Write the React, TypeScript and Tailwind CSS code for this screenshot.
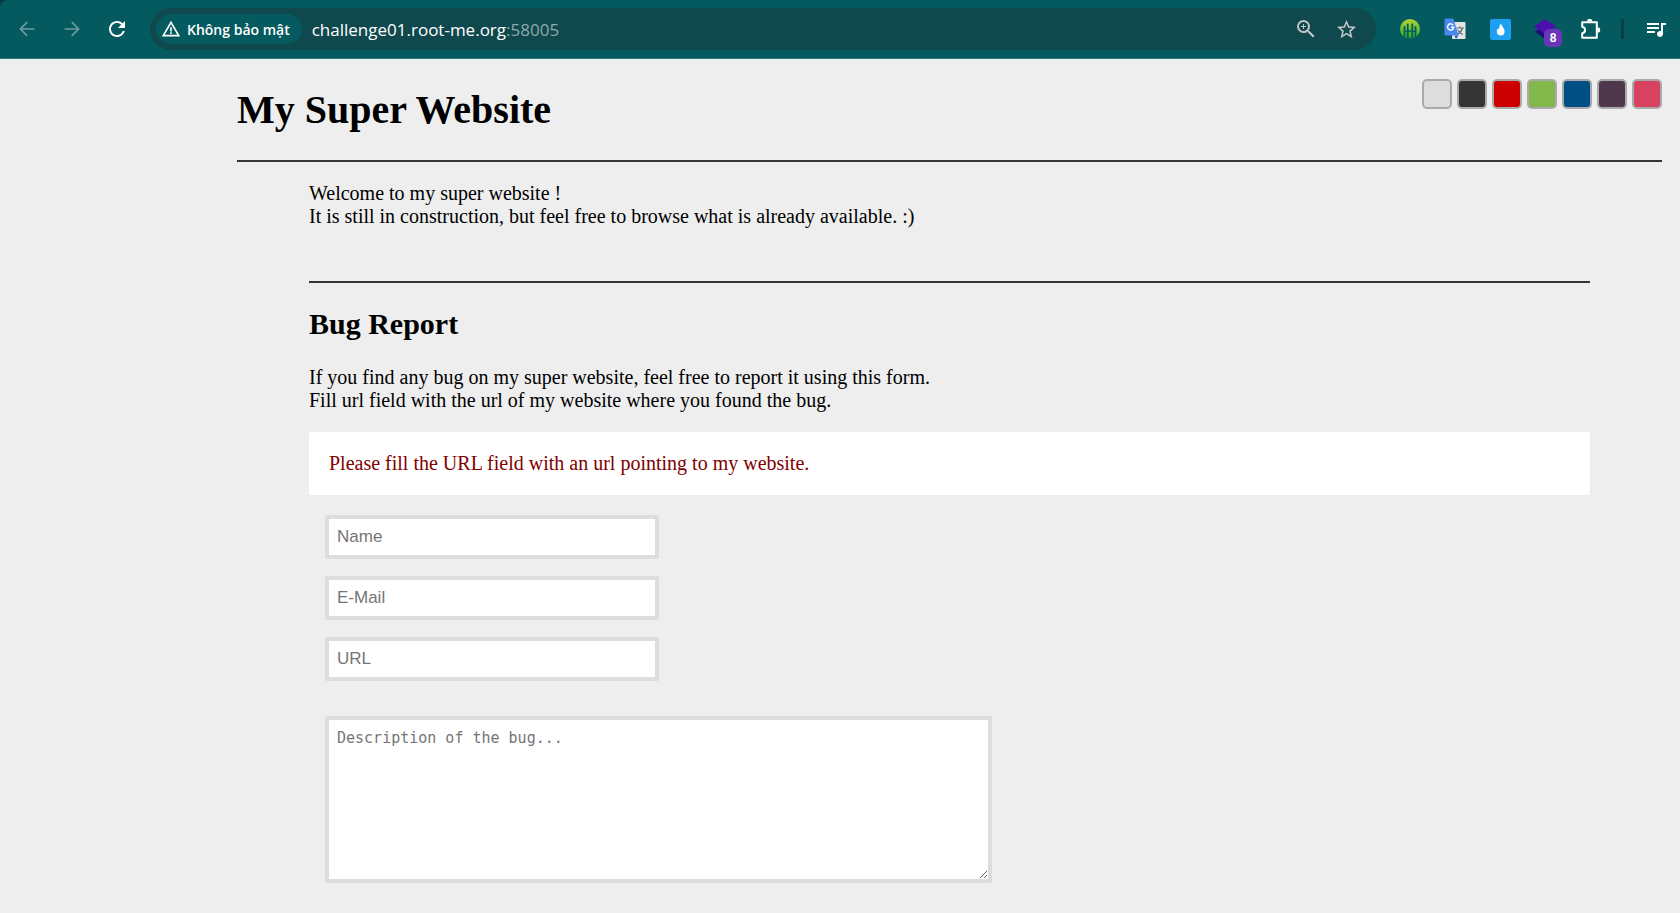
import React from "react";
import { MdQueueMusic, MdRefresh, MdStarBorder, MdWarningAmber, MdZoomIn } from "react-icons/md";

const themes = [
  { name: "Light", color: "bg-[#dddddd]" },
  { name: "Dark", color: "bg-[#353535]" },
  { name: "Red", color: "bg-[#cc0000]" },
  { name: "Green", color: "bg-[#83b84d]" },
  { name: "Blue", color: "bg-[#004f84]" },
  { name: "Plum", color: "bg-[#4f384c]" },
  { name: "Pink", color: "bg-[#d84160]" },
];

const fields = [
  { id: "name", label: "Name", type: "text" },
  { id: "email", label: "E-Mail", type: "email" },
  { id: "url", label: "URL", type: "text" },
];

function ToolButton({ label, children }: { label: string; children: React.ReactNode }) {
  return (
    <button type="button" aria-label={label} className="flex size-9 shrink-0 items-center justify-center">
      {children}
    </button>
  );
}

function ArrowIcon({ className }: { className?: string }) {
  return (
    <svg viewBox="0 0 16 16" className={className} width="16" height="16" fill="none" stroke="currentColor" strokeWidth="1.7">
      <path d="M15.3 8H1.6M8.2 1.2 1.4 8l6.8 6.8" />
    </svg>
  );
}

function TreesIcon() {
  return (
    <svg viewBox="0 0 20 20" width="20" height="20">
      <defs>
        <linearGradient id="leaf" x1="0" y1="0" x2="0" y2="1">
          <stop offset="0" stopColor="#b4d332" />
          <stop offset="1" stopColor="#22a833" />
        </linearGradient>
        <clipPath id="disc">
          <circle cx="10" cy="10" r="10" />
        </clipPath>
      </defs>
      <circle cx="10" cy="10" r="10" fill="url(#leaf)" />
      <g clipPath="url(#disc)" stroke="#055a5f" strokeLinecap="round" fill="none">
        <path d="M4.5 8v12M7.700 5.500v14.500M12.300 5.500v14.500M15.500 8v12" strokeWidth="1.800" />
        <path d="M4.500 12.500h3.200M7.700 11l2.300 1.500 2.300-1.500M12.300 12.500h3.200" strokeWidth="1.200" />
        <path d="M1 19.500h18" strokeWidth="1.500" />
      </g>
    </svg>
  );
}

function TranslateIcon() {
  return (
    <svg viewBox="0 0 22 22" width="22" height="22">
      <rect x="8" y="4" width="13.500" height="17" rx="1" fill="#e3e5e6" />
      <path d="M12.500 10h7.500M16 8.500V10M18.500 10c-.8 3-2.500 5-5 6.500M14 12c1 2 2.500 3.500 4.800 4.500" stroke="#5f6f76" strokeWidth="1.200" fill="none" />
      <path d="M10.500 17.500h4L12 21z" fill="#2f56c8" />
      <path d="M1.500.5h7.800l5.400 17H1.500a1 1 0 0 1-1-1v-15a1 1 0 0 1 1-1Z" fill="#4a86f0" />
      <path d="M9.200 7.200A3.100 3.100 0 1 0 9.700 9.300H7" stroke="#fff" strokeWidth="1.400" fill="none" />
    </svg>
  );
}

function DropIcon() {
  return (
    <svg viewBox="0 0 21 21" width="21" height="21">
      <rect width="21" height="21" rx="2" fill="#1d9ff2" />
      <path d="M11 4.500c.6 2.700 3.600 4.800 3.600 8a3.900 3.900 0 0 1-7.800 0c0-1.400.6-2.400 1.300-3.200.2.600.6 1 1.100 1.200-.1-2.400.5-4.600 1.800-6Z" fill="#fff" />
    </svg>
  );
}

function LayersIcon() {
  return (
    <svg viewBox="0 0 22 20" width="22" height="20">
      <path d="M1 12.500 11 7l10 5.500L11 20z" fill="#1d0a78" />
      <path d="M11 0 22 7.500 11 15 0 7.500z" fill="#4a0fae" />
    </svg>
  );
}

function PuzzleIcon() {
  return (
    <svg viewBox="0 0 21 21" width="21" height="21">
      <path
        d="M2.200 3.200h14.600v15.600H2.200v-4.500c3.800-.6 3.800-6 0-6.600z"
        fill="none"
        stroke="#fff"
        strokeWidth="2"
        strokeLinejoin="round"
      />
      <path d="M7 2.500a2.700 2.700 0 0 1 5.400 0zM17.500 8.300a2.700 2.700 0 0 1 0 5.400z" fill="#fff" />
    </svg>
  );
}

function BrowserBar() {
  return (
    <div className="bg-[#063c42]">
      <header className="flex h-[59px] items-center rounded-tl-lg border-b border-[#24767b] bg-[#055a5f] pr-1.5 pl-[9px]">
        <nav aria-label="Browser" className="flex gap-[9px]">
          <ToolButton label="Back">
            <ArrowIcon className="text-[#6d9da0]" />
          </ToolButton>
          <ToolButton label="Forward">
            <ArrowIcon className="rotate-180 text-[#6d9da0]" />
          </ToolButton>
          <ToolButton label="Reload">
            <MdRefresh className="size-6 text-white" />
          </ToolButton>
        </nav>
        <div className="ml-[15px] flex h-[42px] min-w-0 flex-1 items-center rounded-full bg-[#0f484d] pr-3 pl-1.5">
          <button type="button" className="flex h-[30px] shrink-0 items-center gap-1.5 rounded-full bg-[#055a5f] pr-3 pl-[5px] font-['Open_Sans',sans-serif] text-[14px] font-semibold text-white">
            <MdWarningAmber className="size-5" />
            Không bảo mật
          </button>
          <p className="ml-2.5 min-w-0 flex-1 truncate font-['Open_Sans',sans-serif] text-[17px] text-white">
            challenge01.root-me.org<span className="text-[#8fa9ab]">:58005</span>
          </p>
          <div className="flex gap-1 text-[#c4c7c8]">
            <ToolButton label="Zoom">
              <MdZoomIn className="size-6" />
            </ToolButton>
            <ToolButton label="Bookmark this page">
              <MdStarBorder className="size-[23px]" />
            </ToolButton>
          </div>
        </div>
        <div className="ml-4 flex items-center gap-[9px]">
          <ToolButton label="Trees extension">
            <TreesIcon />
          </ToolButton>
          <ToolButton label="Translate">
            <TranslateIcon />
          </ToolButton>
          <ToolButton label="Drop extension">
            <DropIcon />
          </ToolButton>
          <div className="relative">
            <ToolButton label="Layers extension">
              <LayersIcon />
            </ToolButton>
            <span className="absolute top-[18px] left-[17px] flex size-[18px] items-center justify-center rounded-[5px] bg-[#6936b8] font-['Liberation_Sans',sans-serif] text-xs font-bold text-white">
              8
            </span>
          </div>
          <ToolButton label="Extensions">
            <PuzzleIcon />
          </ToolButton>
        </div>
        <div className="mr-3.5 ml-[13px] h-5 w-[3px] bg-[#063f45]" />
        <ToolButton label="Media controls">
          <MdQueueMusic className="size-6 text-white" />
        </ToolButton>
      </header>
    </div>
  );
}

export default function App() {
  return (
    <div className="min-h-screen bg-[#eeeeee] font-['Liberation_Serif',serif] text-[20px] leading-[23px] text-black">
      <BrowserBar />
      <div className="pr-[18px] pl-[237px]">
        <div className="flex items-start justify-between border-b-2 border-[#353535]">
          <h1 className="py-[27px] text-[40px] leading-[47px] font-bold">My Super Website</h1>
          <div className="mt-5 flex gap-[5px]">
            {themes.map((t) => (
              <button
                key={t.name}
                type="button"
                aria-label={t.name}
                className={`size-[30px] rounded-[5px] border-2 border-[#aaaaaa] ${t.color}`}
              />
            ))}
          </div>
        </div>
        <main className="px-18">
          <p className="pt-5 pb-[53px]">
            Welcome to my super website !
            <br />
            It is still in construction, but feel free to browse what is already available. :)
          </p>
          <section className="border-t-2 border-[#353535] pb-5">
            <h2 className="mt-6 mb-[25px] text-[30px] leading-[34px] font-bold">Bug Report</h2>
            <p>
              If you find any bug on my super website, feel free to report it using this form.
              <br />
              Fill url field with the url of my website where you found the bug.
            </p>
            <p role="alert" className="my-5 rounded-xs bg-white p-5 text-[#800000]">
              Please fill the URL field with an url pointing to my website.
            </p>
            <form className="flex flex-col items-start pl-4">
              <div className="flex flex-col gap-[17px]">
                {fields.map((f) => (
                  <input
                    key={f.id}
                    id={f.id}
                    type={f.type}
                    aria-label={f.label}
                    placeholder={f.label}
                    className="h-11 w-[334px] rounded-xs border-4 border-[#dddddd] bg-white px-2 font-['Liberation_Sans',sans-serif] text-[17px] placeholder:text-[#757575]"
                  />
                ))}
              </div>
              <textarea
                id="description"
                aria-label="Description of the bug"
                placeholder="Description of the bug..."
                className="mt-[35px] h-[167px] w-[667px] resize rounded-xs border-4 border-[#dddddd] bg-white p-2 font-['DejaVu_Sans_Mono',monospace] text-[15px] leading-5 placeholder:text-[#757575]"
              />
            </form>
          </section>
        </main>
      </div>
    </div>
  );
}
